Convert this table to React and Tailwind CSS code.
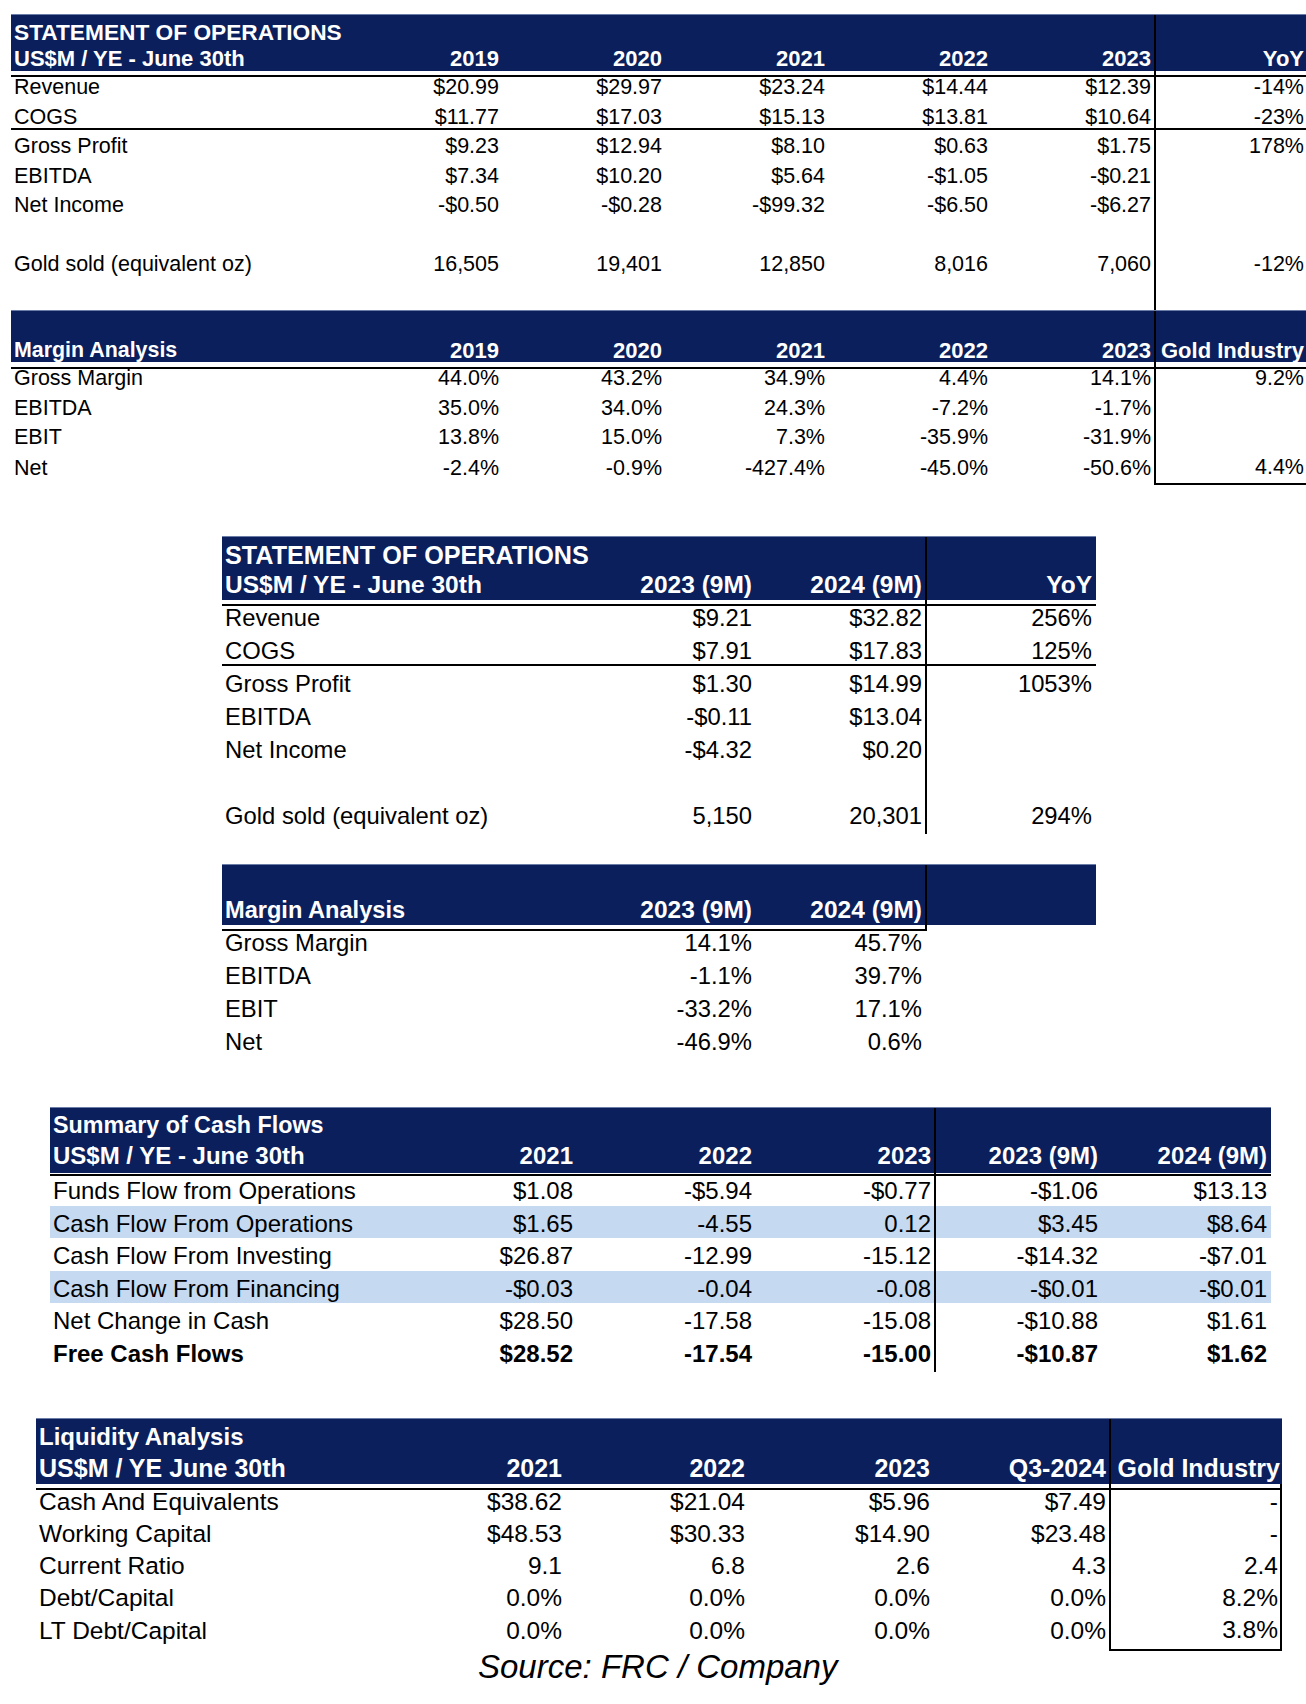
import React from 'react'

// financial summary tables, laid out like the spreadsheet export

const ops = {
  wrap: 'ml-[11px] w-[1295px]',
  grid: 'grid-cols-[328px_163px_163px_163px_163px_163px_152px]',
  sep: 6,
  h1: 'h-[28px]',
  h2: 'h-[29px]',
  p1: 'pb-[8px]',
  rh: 'h-[29.5px]',
  headText: 'text-[22px]',
  titleText: 'text-[22.7px]',
  bodyText: 'text-[21.5px]',
  lastPad: 'pr-[2px]',
  title: 'STATEMENT OF OPERATIONS',
  heads: ['US$M / YE - June 30th', '2019', '2020', '2021', '2022', '2023', 'YoY'],
  rows: [
    { c: ['Revenue', '$20.99', '$29.97', '$23.24', '$14.44', '$12.39', '-14%'] },
    { c: ['COGS', '$11.77', '$17.03', '$15.13', '$13.81', '$10.64', '-23%'], line: true },
    { c: ['Gross Profit', '$9.23', '$12.94', '$8.10', '$0.63', '$1.75', '178%'] },
    { c: ['EBITDA', '$7.34', '$10.20', '$5.64', '-$1.05', '-$0.21', ''] },
    { c: ['Net Income', '-$0.50', '-$0.28', '-$99.32', '-$6.50', '-$6.27', ''] },
    { c: ['', '', '', '', '', '', ''] },
    { c: ['Gold sold (equivalent oz)', '16,505', '19,401', '12,850', '8,016', '7,060', '-12%'] },
    { c: ['', '', '', '', '', '', ''], h: 'h-[32.5px]' },
  ],
}

const margins = {
  wrap: 'ml-[11px] w-[1295px]',
  grid: 'grid-cols-[328px_163px_163px_163px_163px_163px_152px]',
  sep: 6,
  h1: 'h-[24px]',
  h2: 'h-[28px]',
  rh: 'h-[29.5px]',
  headText: 'text-[22px]',
  firstText: 'text-[21.4px]',
  bodyText: 'text-[21.5px]',
  lastPad: 'pr-[2px]',
  title: '',
  boxLast: true,
  heads: ['Margin Analysis', '2019', '2020', '2021', '2022', '2023', 'Gold Industry'],
  rows: [
    { c: ['Gross Margin', '44.0%', '43.2%', '34.9%', '4.4%', '14.1%', '9.2%'] },
    { c: ['EBITDA', '35.0%', '34.0%', '24.3%', '-7.2%', '-1.7%', ''] },
    { c: ['EBIT', '13.8%', '15.0%', '7.3%', '-35.9%', '-31.9%', ''] },
    { c: ['Net', '-2.4%', '-0.9%', '-427.4%', '-45.0%', '-50.6%', '4.4%'] },
  ],
}

const ops9m = {
  wrap: 'ml-[222px] w-[874px] mt-[56px]',
  grid: 'grid-cols-[373px_160px_170px_171px]',
  sep: 3,
  h1: 'h-[31px]',
  h2: 'h-[33px]',
  p1: 'pb-[8px]',
  rh: 'h-[33px]',
  headText: 'text-[24.5px]',
  titleText: 'text-[25.2px]',
  bodyText: 'text-[23.8px]',
  lastPad: 'pr-[4px]',
  title: 'STATEMENT OF OPERATIONS',
  heads: ['US$M / YE - June 30th', '2023 (9M)', '2024 (9M)', 'YoY'],
  rows: [
    { c: ['Revenue', '$9.21', '$32.82', '256%'] },
    { c: ['COGS', '$7.91', '$17.83', '125%'], line: true },
    { c: ['Gross Profit', '$1.30', '$14.99', '1053%'] },
    { c: ['EBITDA', '-$0.11', '$13.04', ''] },
    { c: ['Net Income', '-$4.32', '$0.20', ''] },
    { c: ['', '', '', ''] },
    { c: ['Gold sold (equivalent oz)', '5,150', '20,301', '294%'] },
  ],
}

const margins9m = {
  wrap: 'ml-[222px] w-[874px] mt-[33px]',
  grid: 'grid-cols-[373px_160px_170px_171px]',
  sep: 3,
  sepBody: false,
  lineStop: 3,
  h1: 'h-[28px]',
  h2: 'h-[33px]',
  rh: 'h-[33px]',
  headText: 'text-[24.5px]',
  firstText: 'text-[23.6px]',
  bodyText: 'text-[23.8px]',
  lastPad: 'pr-[4px]',
  title: '',
  heads: ['Margin Analysis', '2023 (9M)', '2024 (9M)', ''],
  rows: [
    { c: ['Gross Margin', '14.1%', '45.7%', ''] },
    { c: ['EBITDA', '-1.1%', '39.7%', ''] },
    { c: ['EBIT', '-33.2%', '17.1%', ''] },
    { c: ['Net', '-46.9%', '0.6%', ''] },
  ],
}

const cash = {
  wrap: 'ml-[50px] w-[1221px] mt-[50px]',
  grid: 'grid-cols-[363px_163px_179px_179px_167px_170px]',
  sep: 4,
  h1: 'h-[31px]',
  h2: 'h-[35px]',
  p1: 'pb-[7px]',
  rh: 'h-[32.5px]',
  headText: 'text-[24px]',
  titleText: 'text-[23.3px]',
  bodyText: 'text-[24px]',
  lastPad: 'pr-[4px]',
  title: 'Summary of Cash Flows',
  heads: ['US$M / YE - June 30th', '2021', '2022', '2023', '2023 (9M)', '2024 (9M)'],
  rows: [
    { c: ['Funds Flow from Operations', '$1.08', '-$5.94', '-$0.77', '-$1.06', '$13.13'] },
    { c: ['Cash Flow From Operations', '$1.65', '-4.55', '0.12', '$3.45', '$8.64'], shade: true },
    { c: ['Cash Flow From Investing', '$26.87', '-12.99', '-15.12', '-$14.32', '-$7.01'] },
    { c: ['Cash Flow From Financing', '-$0.03', '-0.04', '-0.08', '-$0.01', '-$0.01'], shade: true },
    { c: ['Net Change in Cash', '$28.50', '-17.58', '-15.08', '-$10.88', '$1.61'] },
    { c: ['Free Cash Flows', '$28.52', '-17.54', '-15.00', '-$10.87', '$1.62'], bold: true },
  ],
}

const liquidity = {
  wrap: 'ml-[36px] w-[1246px] mt-[50px]',
  grid: 'grid-cols-[367px_162px_183px_185px_176px_173px]',
  sep: 5,
  h1: 'h-[32px]',
  h2: 'h-[34px]',
  p1: 'pb-[5px]',
  rh: 'h-[32px]',
  headText: 'text-[25px]',
  titleText: 'text-[24px]',
  bodyText: 'text-[24.5px]',
  lastPad: 'pr-[2px]',
  boxLast: true,
  rightBox: true,
  title: 'Liquidity Analysis',
  heads: ['US$M / YE June 30th', '2021', '2022', '2023', 'Q3-2024', 'Gold Industry'],
  rows: [
    { c: ['Cash And Equivalents', '$38.62', '$21.04', '$5.96', '$7.49', '-'] },
    { c: ['Working Capital', '$48.53', '$30.33', '$14.90', '$23.48', '-'] },
    { c: ['Current Ratio', '9.1', '6.8', '2.6', '4.3', '2.4'] },
    { c: ['Debt/Capital', '0.0%', '0.0%', '0.0%', '0.0%', '8.2%'] },
    { c: ['LT Debt/Capital', '0.0%', '0.0%', '0.0%', '0.0%', '3.8%'] },
  ],
}

function cellClass(t, i, { sep = true, body = false, last = false, head2 = false }) {
  const n = t.heads.length
  let c = i === 0
    ? 'flex items-center pl-[3px] whitespace-nowrap'
    : 'flex items-center justify-end whitespace-nowrap'
  if (i > 0) c += i === n - 1 ? ' ' + t.lastPad : ' pr-[3px]'
  if (i === t.sep && sep) c += ' border-l-2 border-black'
  if (head2 && (t.lineStop === undefined || i < t.lineStop)) c += ' border-b-2 border-black'
  if (body && t.rightBox && i === n - 1) c += ' border-r-2 border-black'
  if (body && last && t.boxLast && i === t.sep) c += ' border-b-2 border-black'
  return c
}

function Table({ t }) {
  const bodySep = t.sepBody !== false
  return (
    <div className={t.wrap}>
      <div className={`grid ${t.grid} ${t.h1} ${t.headText} bg-[#0b1f5c] text-white font-bold border-t border-[#6b7ca6]`}>
        {t.heads.map((_, i) => (
          <div key={i} className={`${cellClass(t, i, {})} ${t.p1 || ''} ${i === 0 ? t.titleText || '' : ''}`}>
            {i === 0 ? t.title : ''}
          </div>
        ))}
      </div>
      <div className={`grid ${t.grid} ${t.h2} ${t.headText} bg-[#0b1f5c] text-white font-bold`}>
        {t.heads.map((h, i) => (
          <div key={i} className={`${cellClass(t, i, { head2: true })} ${i === 0 ? t.firstText || '' : ''}`}>
            {h}
          </div>
        ))}
      </div>
      {t.rows.map((r, ri) => {
        const last = ri === t.rows.length - 1
        return (
          <div
            key={ri}
            className={`grid ${t.grid} ${r.h || t.rh} ${t.bodyText} text-black ${r.line ? 'border-b-2 border-black' : ''} ${r.shade ? 'bg-[#c5d9f1]' : ''} ${r.bold ? 'font-bold' : ''}`}
          >
            {r.c.map((v, i) => (
              <div key={i} className={cellClass(t, i, { sep: bodySep, body: true, last })}>{v}</div>
            ))}
          </div>
        )
      })}
    </div>
  )
}

export default function App() {
  return (
    <div className="w-[1306px] h-[1704px] bg-white pt-[14px] font-['Liberation_Sans',Arial,sans-serif] overflow-hidden">
      <Table t={ops} />
      <Table t={margins} />
      <Table t={ops9m} />
      <Table t={margins9m} />
      <Table t={cash} />
      <Table t={liquidity} />
      <div className="ml-[478px] mt-[5px] text-[33px] leading-[36px] italic text-black">
        Source: FRC / Company
      </div>
    </div>
  )
}
